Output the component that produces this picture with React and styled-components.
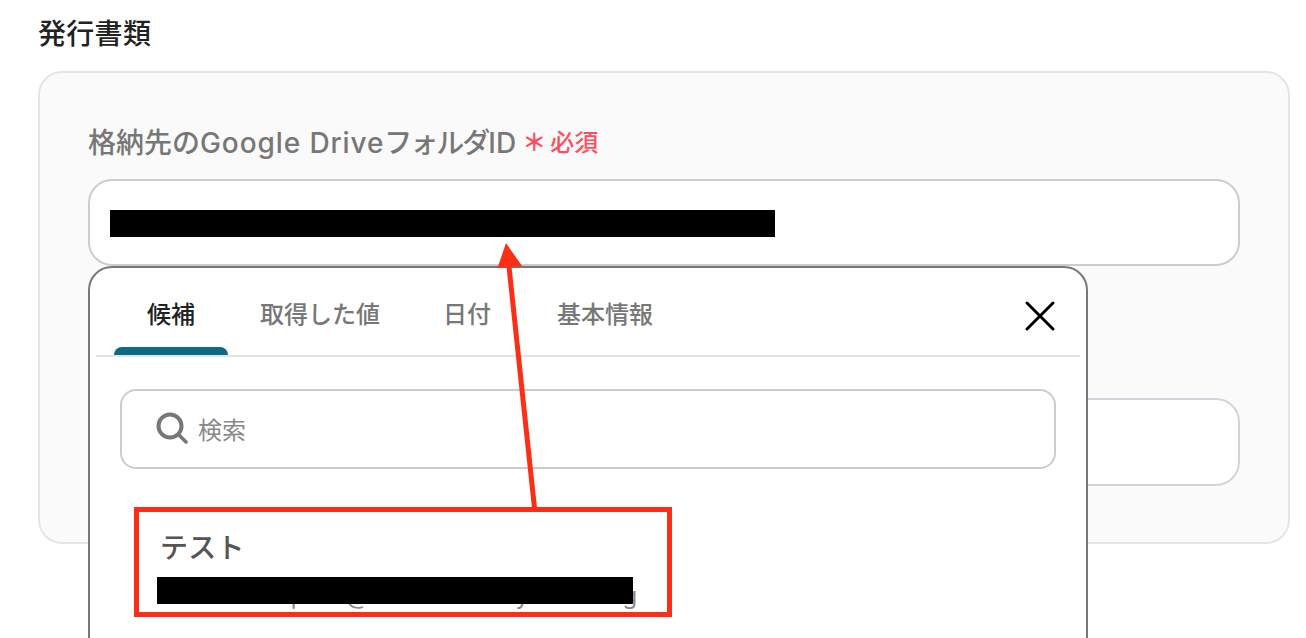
import React from "react";
import styled, { createGlobalStyle } from "styled-components";

const Global = createGlobalStyle`
  html, body { margin: 0; padding: 0; background: #fff; }
  body { font-family: Inter, "Noto Sans CJK JP", sans-serif; }
  * { box-sizing: border-box; }
`;

const Page = styled.div`
  position: relative;
  width: 1306px;
  height: 638px;
  overflow: hidden;
  padding: 14px 16px 0 38px;
`;
const Title = styled.h2`
  margin: 0 0 17px;
  height: 40px;
  font-size: 28px;
  line-height: 40px;
  font-weight: 500;
  letter-spacing: 0.3px;
  color: #222;
`;
const Card = styled.section`
  height: 473px;
  padding: 50px 48px 0 48px;
  background: #fafafa;
  border: 2px solid #e2e6ea;
  border-radius: 24px;
`;
const Field = styled.div`
  position: relative;
`;
const Label = styled.div`
  display: flex;
  align-items: center;
  height: 40px;
  margin-bottom: 16px;
  font-size: 28px;
  line-height: 40px;
  font-weight: 500;
  color: #777;
  white-space: nowrap;
`;
const LabelLatin = styled.span`
  letter-spacing: 0.9px;
`;
const LabelKana = styled.span`
  letter-spacing: -2px;
`;
const Star = styled.span`
  margin: 0 4px 0 6px;
  font-size: 24px;
  font-weight: 700;
  color: #ff4d5e;
`;
const Required = styled.span`
  font-size: 24px;
  font-weight: 500;
  color: #ff4d5e;
`;
const Input = styled.div`
  height: ${(p) => p.$h}px;
  margin-top: ${(p) => p.$top || 0}px;
  padding: 29px 0 0 20px;
  background: #fff;
  border: 2px solid ${(p) => p.$border};
  border-radius: 24px;
`;
const Redact = styled.div`
  width: ${(p) => p.$w}px;
  height: 27px;
  background: #000;
`;
const Popup = styled.div`
  position: absolute;
  left: 0;
  top: 143px;
  width: 1000px;
  height: 500px;
  padding: 0 6px;
  background: #fff;
  border: 2px solid #777;
  border-radius: 24px 24px 0 0;
`;
const Tabs = styled.div`
  position: relative;
  display: flex;
  height: 89px;
  padding-left: 18px;
  border-bottom: 2px solid #e4e4e6;
`;
const Tab = styled.div`
  position: relative;
  width: ${(p) => p.$w}px;
  margin-right: ${(p) => p.$gap}px;
  padding-top: 29px;
  text-align: center;
  font-size: 24px;
  line-height: 36px;
  font-weight: 500;
  white-space: nowrap;
  color: ${(p) => (p.$active ? "#222" : "#777")};
  ${(p) =>
    p.$active &&
    `&::after {
      content: "";
      position: absolute;
      left: 0;
      right: 0;
      bottom: 0;
      height: 8px;
      background: #0d6a82;
      border-radius: 8px 8px 0 0;
    }`}
`;
const Close = styled.svg`
  position: absolute;
  right: 30px;
  top: 32px;
  width: 32px;
  height: 32px;
`;
const Body = styled.div`
  padding: 32px 24px 0 24px;
`;
const Search = styled.div`
  display: flex;
  align-items: center;
  gap: 10px;
  height: 80px;
  padding: 0 0 2px 34px;
  border: 2px solid #ccc;
  border-radius: 16px;
  font-size: 24px;
  color: #888;
`;
const Option = styled.div`
  position: relative;
  margin: 61px 0 0 37px;
  color: #555;
`;
const OptionName = styled.div`
  padding-left: 3px;
  font-size: 28px;
  line-height: 40px;
  font-weight: 500;
  letter-spacing: 0.3px;
  margin-top: -2px;
`;
const OptionId = styled.div`
  position: relative;
  height: 40px;
  margin-top: 8px;
  padding-top: 5px;
  font-size: 24px;
  line-height: 30px;
  letter-spacing: -0.1px;
  color: #888;
  white-space: nowrap;
`;
const OptionMask = styled.div`
  position: absolute;
  left: 0;
  top: 1px;
  width: 476px;
  height: 27px;
  background: #000;
`;
const Overlay = styled.svg`
  position: absolute;
  left: 0;
  top: 0;
  pointer-events: none;
`;

export default function App() {
  return (
    <Page>
      <Global />
      <Title>発行書類</Title>
      <Card>
        <Field>
          <Label>
            格納先の
            <LabelLatin>Google Drive</LabelLatin>
            <LabelKana>フォルダ</LabelKana>
            ID
            <Star>＊</Star>
            <Required>必須</Required>
          </Label>
          <Input $h={87} $border="#ccc">
            <Redact $w={665} />
          </Input>
          <Input $h={88} $top={132} $border="#d0d5dd" />
          <Popup>
            <Tabs>
              <Tab $active $w={114} $gap={32}>候補</Tab>
              <Tab $w={118} $gap={65}>取得した値</Tab>
              <Tab $w={48} $gap={65}>日付</Tab>
              <Tab $w={98} $gap={0}>基本情報</Tab>
            </Tabs>
            <Close viewBox="0 0 32 32" fill="none" stroke="#000" strokeWidth="3" strokeLinecap="round">
              <path d="M3 3 L29 29 M29 3 L3 29" />
            </Close>
            <Body>
              <Search>
                <svg width="32" height="32" viewBox="0 0 32 32" fill="none" stroke="#777" strokeWidth="4" strokeLinecap="round">
                  <circle cx="14" cy="14" r="11.5" />
                  <path d="M23 23 L30 30" strokeWidth="3.5" />
                </svg>
                検索
              </Search>
              <Option>
                <OptionName>テスト</OptionName>
                <OptionId>
                  aaaaaaaaaapaaa@aaaaaaaaaaayaaaaaaag
                  <OptionMask />
                </OptionId>
              </Option>
            </Body>
          </Popup>
        </Field>
      </Card>
      <Overlay width="1306" height="638" viewBox="0 0 1306 638">
        <path d="M534.5 508 L508.5 262" stroke="#ff2d16" strokeWidth="5" fill="none" />
        <path d="M506 243 L497.5 268 L522 266 Z" fill="#ff2d16" />
        <rect x="136.5" y="509.5" width="533" height="105" fill="none" stroke="#ff2d16" strokeWidth="5" />
      </Overlay>
    </Page>
  );
}
